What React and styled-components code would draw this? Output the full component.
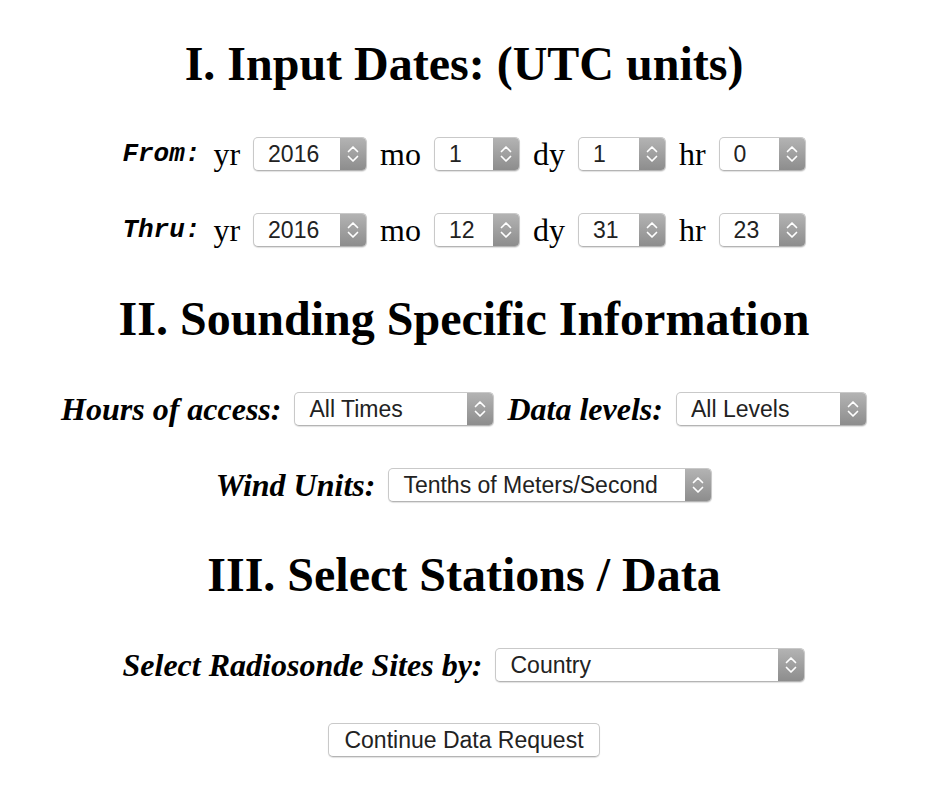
import React from "react";
import styled, { createGlobalStyle } from "styled-components";

const GlobalStyle = createGlobalStyle`
  body {
    margin: 0;
    background: #ffffff;
    color: #000000;
    font-family: "Liberation Serif", "Times New Roman", serif;
  }
`;

const Page = styled.div`
  display: flex;
  flex-direction: column;
  align-items: center;
  padding: 36px 20px 40px 8px;
`;

const Heading = styled.h2`
  margin: ${({ top }) => top || 0}px 0 0;
  font-size: 48px;
  line-height: 56px;
  font-weight: bold;
  text-align: center;
`;

const Row = styled.div`
  display: flex;
  align-items: center;
  gap: 13px;
  height: 34px;
  margin-top: ${({ top }) => top || 0}px;
`;

const Word = styled.span`
  font-size: 32px;
  line-height: normal;
`;

const Label = styled.span`
  font-size: 32px;
  line-height: normal;
  font-weight: bold;
  font-style: italic;
`;

const MonoLabel = styled.span`
  font-family: "Liberation Mono", "Courier New", monospace;
  font-size: 26px;
  font-weight: bold;
  font-style: italic;
`;

const SelectBox = styled.div`
  display: inline-flex;
  box-sizing: border-box;
  width: ${({ width }) => width}px;
  height: 34px;
  border: 1px solid #c9c9c9;
  border-bottom-color: #b4b4b4;
  border-radius: 5px;
  background: #ffffff;
  box-shadow: 0 1px 1px rgba(0, 0, 0, 0.12);
  overflow: hidden;
`;

const NativeSelect = styled.select`
  flex: 1;
  min-width: 0;
  appearance: none;
  -webkit-appearance: none;
  border: none;
  outline: none;
  background: transparent;
  padding: 0 0 0 14px;
  margin: 0;
  font-family: "Liberation Sans", Arial, sans-serif;
  font-size: 23px;
  color: #222222;
`;

const Stepper = styled.span`
  display: flex;
  align-items: center;
  justify-content: center;
  width: 26px;
  flex-shrink: 0;
  background: linear-gradient(#b3b3b3, #8d8d8d);
`;

const Button = styled.button`
  margin-top: 41px;
  height: 34px;
  padding: 0 15px;
  border: 1px solid #c9c9c9;
  border-bottom-color: #b4b4b4;
  border-radius: 5px;
  background: #ffffff;
  box-shadow: 0 1px 1px rgba(0, 0, 0, 0.12);
  font-family: "Liberation Sans", Arial, sans-serif;
  font-size: 23px;
  color: #222222;
`;

function Chevrons() {
  return (
    <svg width="12" height="20" viewBox="0 0 12 20" fill="none">
      <path
        d="M1.5 7.5 L6 3 L10.5 7.5"
        stroke="#ffffff"
        strokeWidth="1.7"
        strokeLinecap="round"
        strokeLinejoin="round"
      />
      <path
        d="M1.5 12.5 L6 17 L10.5 12.5"
        stroke="#ffffff"
        strokeWidth="1.7"
        strokeLinecap="round"
        strokeLinejoin="round"
      />
    </svg>
  );
}

function Select({ width, value, options }) {
  return (
    <SelectBox width={width}>
      <NativeSelect defaultValue={value}>
        {(options || [value]).map((o) => (
          <option key={o} value={o}>
            {o}
          </option>
        ))}
      </NativeSelect>
      <Stepper>
        <Chevrons />
      </Stepper>
    </SelectBox>
  );
}

function DateRow({ label, yr, mo, dy, hr, top }) {
  return (
    <Row top={top}>
      <MonoLabel>{label}</MonoLabel>
      <Word>yr</Word>
      <Select width={114} value={yr} />
      <Word>mo</Word>
      <Select width={86} value={mo} />
      <Word>dy</Word>
      <Select width={88} value={dy} />
      <Word>hr</Word>
      <Select width={87} value={hr} />
    </Row>
  );
}

export default function App() {
  return (
    <>
      <GlobalStyle />
      <Page>
        <Heading>I. Input Dates: (UTC units)</Heading>
        <DateRow top={45} label="From:" yr="2016" mo="1" dy="1" hr="0" />
        <DateRow top={42} label="Thru:" yr="2016" mo="12" dy="31" hr="23" />

        <Heading top={44}>II. Sounding Specific Information</Heading>
        <Row top={45}>
          <Label>Hours of access:</Label>
          <Select width={200} value="All Times" />
          <Label>Data levels:</Label>
          <Select width={191} value="All Levels" />
        </Row>
        <Row top={42}>
          <Label>Wind Units:</Label>
          <Select width={324} value="Tenths of Meters/Second" />
        </Row>

        <Heading top={45}>III. Select Stations / Data</Heading>
        <Row top={45}>
          <Label>Select Radiosonde Sites by:</Label>
          <Select width={310} value="Country" />
        </Row>
        <Button>Continue Data Request</Button>
      </Page>
    </>
  );
}
